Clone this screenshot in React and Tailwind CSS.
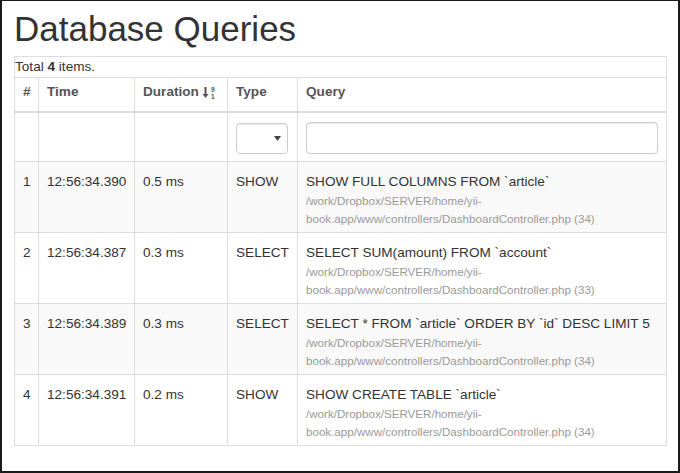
import React from 'react';

const rows = [
    { id: 1, time: '12:56:34.390', duration: '0.5 ms', type: 'SHOW', query: 'SHOW FULL COLUMNS FROM `article`', line: 34, striped: true },
    { id: 2, time: '12:56:34.387', duration: '0.3 ms', type: 'SELECT', query: 'SELECT SUM(amount) FROM `account`', line: 33, striped: false },
    { id: 3, time: '12:56:34.389', duration: '0.3 ms', type: 'SELECT', query: 'SELECT * FROM `article` ORDER BY `id` DESC LIMIT 5', line: 34, striped: true },
    { id: 4, time: '12:56:34.391', duration: '0.2 ms', type: 'SHOW', query: 'SHOW CREATE TABLE `article`', line: 34, striped: false },
];

// flecha de orden numérico descendente (9 sobre 1)
function SortIcon() {
    return (
        <svg width="15" height="13" viewBox="0 0 15 13" className="ml-[3px] inline-block">
            <path d="M3.5 1 V9" stroke="#555" strokeWidth="2" />
            <path d="M0.5 8 H6.5 L3.5 12 Z" fill="#555" />
            <text x="9" y="5.5" fontSize="6.5" fontWeight="bold" fill="#555" fontFamily="Liberation Sans, Arial, sans-serif">9</text>
            <text x="9" y="12.5" fontSize="6.5" fontWeight="bold" fill="#555" fontFamily="Liberation Sans, Arial, sans-serif">1</text>
        </svg>
    );
}

export default function App() {
    const th = 'border border-[#ddd] border-b-2 px-[8px] pt-[4px] pb-[9px] text-left font-bold text-[#555] leading-[20px] align-bottom';
    const td = 'border border-[#ddd] px-[8px] pt-[10px] pb-[4px] align-top leading-[20px]';

    return (
        <div className="w-[680px] h-[473px] border-2 border-t border-[#1a1a1a] bg-white overflow-hidden font-['Liberation_Sans',Arial,sans-serif] text-[#333] text-[13.6px]">
            <h1 className="ml-[12px] mt-[9px] text-[35px] leading-[38px] font-normal text-[#333]">Database Queries</h1>

            <div className="ml-[12px] mt-[8px] w-[653px]">
                {/* Resumen */}
                <div className="border-t border-x border-[#ddd] leading-[20px]">
                    Total <b>4</b> items.
                </div>

                <table className="w-[653px] table-fixed border-collapse border border-[#ddd]">
                    <colgroup>
                        <col className="w-[24px]" />
                        <col className="w-[96px]" />
                        <col className="w-[93px]" />
                        <col className="w-[70px]" />
                        <col />
                    </colgroup>
                    <thead>
                        <tr>
                            <th className={th}>#</th>
                            <th className={th}>Time</th>
                            <th className={th}>
                                <span className="flex items-center">Duration <SortIcon /></span>
                            </th>
                            <th className={th}>Type</th>
                            <th className={th}>Query</th>
                        </tr>
                        <tr>
                            <td className="border border-[#ddd] px-[8px] pt-[9px] pb-[7px]"></td>
                            <td className="border border-[#ddd] px-[8px] pt-[9px] pb-[7px]"></td>
                            <td className="border border-[#ddd] px-[8px] pt-[9px] pb-[7px]"></td>
                            <td className="border border-[#ddd] px-[8px] pt-[9px] pb-[7px]">
                                <div className="w-[52px] h-[31px] border border-[#ccc] rounded-[4px] bg-white shadow-[inset_0_1px_1px_rgba(0,0,0,0.075)] flex items-center justify-end pr-[6px]">
                                    <svg width="7" height="5" viewBox="0 0 7 5">
                                        <path d="M0 0 H7 L3.5 5 Z" fill="#444" />
                                    </svg>
                                </div>
                            </td>
                            <td className="border border-[#ddd] px-[8px] pt-[9px] pb-[7px]">
                                <input
                                    type="text"
                                    className="block w-full h-[32px] border border-[#ccc] rounded-[4px] bg-white shadow-[inset_0_1px_1px_rgba(0,0,0,0.075)] outline-none px-[10px]"
                                />
                            </td>
                        </tr>
                    </thead>
                    <tbody>
                        {rows.map(r => (
                            <tr key={r.id} className={r.striped ? 'bg-[#f9f9f9]' : 'bg-white'}>
                                <td className={td}>{r.id}</td>
                                <td className={td}>{r.time}</td>
                                <td className={td}>{r.duration}</td>
                                <td className={td}>{r.type}</td>
                                <td className={td}>
                                    <div>{r.query}</div>
                                    <div className="text-[11.6px] leading-[18px] text-[#999]">
                                        /work/Dropbox/SERVER/home/yii-book.app/www/controllers/DashboardController.php ({r.line})
                                    </div>
                                </td>
                            </tr>
                        ))}
                    </tbody>
                </table>
            </div>
        </div>
    );
}
